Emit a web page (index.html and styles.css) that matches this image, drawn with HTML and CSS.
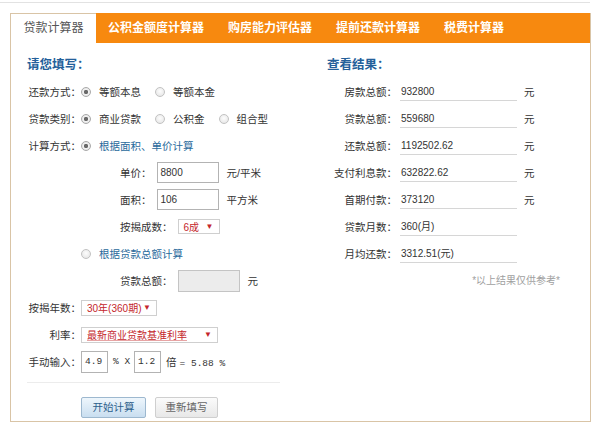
FILE: index.html
```html
<!DOCTYPE html>
<html lang="zh-CN">
<head>
<meta charset="utf-8">
<title>贷款计算器</title>
<link rel="stylesheet" href="styles.css">
</head>
<body>
<div class="topline"></div>
<div class="card">
  <div class="tabs">
    <div class="tab active">贷款计算器</div>
    <div class="tab">公积金额度计算器</div>
    <div class="tab">购房能力评估器</div>
    <div class="tab">提前还款计算器</div>
    <div class="tab">税费计算器</div>
  </div>
  <div class="panel">
    <div class="col-form">
      <h2 class="heading">请您填写：</h2>
      <div class="row">
        <span class="label">还款方式：</span>
        <label class="opt"><input type="radio" name="pay" checked>等额本息</label>
        <label class="opt"><input type="radio" name="pay">等额本金</label>
      </div>
      <div class="row">
        <span class="label">贷款类别：</span>
        <label class="opt"><input type="radio" name="kind" checked>商业贷款</label>
        <label class="opt"><input type="radio" name="kind">公积金</label>
        <label class="opt"><input type="radio" name="kind">组合型</label>
      </div>
      <div class="row">
        <span class="label">计算方式：</span>
        <label class="opt link"><input type="radio" name="mode" checked>根据面积、单价计算</label>
      </div>
      <div class="row sub">
        <span class="sub-label">单价：</span>
        <span class="box">8800</span>
        <span class="unit">元/平米</span>
      </div>
      <div class="row sub">
        <span class="sub-label">面积：</span>
        <span class="box">106</span>
        <span class="unit">平方米</span>
      </div>
      <div class="row sub">
        <span class="sub-label">按揭成数：</span>
        <span class="select sel-ratio"><span class="sel-text">6成</span><span class="arrow">▼</span></span>
      </div>
      <div class="row">
        <span class="label"></span>
        <label class="opt link"><input type="radio" name="mode">根据贷款总额计算</label>
      </div>
      <div class="row sub">
        <span class="sub-label">贷款总额：</span>
        <span class="box box-off"></span>
        <span class="unit">元</span>
      </div>
      <div class="row">
        <span class="label">按揭年数：</span>
        <span class="select sel-years"><span class="sel-text">30年(360期)</span><span class="arrow">▼</span></span>
      </div>
      <div class="row">
        <span class="label">利率：</span>
        <span class="select sel-rate"><span class="sel-text under">最新商业贷款基准利率</span><span class="arrow">▼</span></span>
      </div>
      <div class="row">
        <span class="label">手动输入：</span>
        <span class="box mono small">4.9</span>
        <span class="mono op">% X</span>
        <span class="box mono small">1.2</span>
        <span class="op">倍 <span class="mono">= 5.88 %</span></span>
      </div>
      <div class="sep"></div>
      <div class="actions">
        <button class="btn btn-go">开始计算</button>
        <button class="btn btn-reset">重新填写</button>
      </div>
    </div>
    <div class="col-result">
      <h2 class="heading">查看结果：</h2>
      <div class="row"><span class="rlabel">房款总额：</span><span class="val">932800</span><span class="runit">元</span></div>
      <div class="row"><span class="rlabel">贷款总额：</span><span class="val">559680</span><span class="runit">元</span></div>
      <div class="row"><span class="rlabel">还款总额：</span><span class="val">1192502.62</span><span class="runit">元</span></div>
      <div class="row"><span class="rlabel">支付利息款：</span><span class="val">632822.62</span><span class="runit">元</span></div>
      <div class="row"><span class="rlabel">首期付款：</span><span class="val">373120</span><span class="runit">元</span></div>
      <div class="row"><span class="rlabel">贷款月数：</span><span class="val">360(月)</span></div>
      <div class="row"><span class="rlabel">月均还款：</span><span class="val">3312.51(元)</span></div>
      <div class="note">*以上结果仅供参考*</div>
    </div>
  </div>
</div>
</body>
</html>
```

FILE: styles.css
```css
body {
  margin: 0;
  background: #fff;
  color: #333;
  font-family: "Liberation Sans", "Noto Sans CJK SC", sans-serif;
  font-size: 10.5px;
}

.topline {
  width: 590px;
  height: 1px;
  margin-top: 2px;
  background: #e2e2e2;
}

.card {
  width: 579px;
  margin: 10px 0 0 10px;
  border: 1px solid #d9c4a6;
  border-top: none;
}

/* tab strip */
.tabs {
  display: flex;
  height: 30px;
  background: #f7890f;
}

.tab {
  padding: 0 12px;
  color: #fff;
  font-size: 12px;
  font-weight: bold;
  line-height: 30px;
  white-space: nowrap;
}

.tab.active {
  box-sizing: border-box;
  width: 85px;
  padding: 0;
  background: #fff;
  border-top: 1px solid #d9c4a6;
  color: #555;
  font-weight: normal;
  line-height: 29px;
  text-align: center;
}

/* two columns */
.panel {
  display: flex;
  padding: 9px 0 3px 16px;
}

.col-form {
  width: 300px;
}

.col-result {
  width: 250px;
}

.heading {
  margin: 0;
  height: 26px;
  line-height: 26px;
  font-size: 12.5px;
  font-weight: bold;
  color: #24609a;
}

.row {
  display: flex;
  align-items: center;
  height: 27px;
  white-space: nowrap;
}

.label {
  width: 54px;
  text-align: right;
}

.opt {
  display: flex;
  align-items: center;
  margin-right: 14px;
}

.opt.link {
  color: #2a6a9c;
}

/* radios */
.opt input {
  appearance: none;
  -webkit-appearance: none;
  box-sizing: border-box;
  width: 10px;
  height: 10px;
  margin: 0 8px 0 0;
  border: 1px solid #c2c2c2;
  border-radius: 50%;
  background: radial-gradient(circle at 50% 40%, #fdfdfd 0, #e2e2e2 100%);
}

.opt input:checked {
  border-color: #a9a9a9;
  background: radial-gradient(circle, #6a6a6a 0, #6a6a6a 1.8px, #f2f2f2 2.5px, #dcdcdc 100%);
}

/* indented sub rows */
.row.sub {
  padding-left: 93px;
}

.sub-label {
  margin-right: 5px;
}

.box {
  box-sizing: border-box;
  display: inline-block;
  width: 62px;
  height: 21px;
  padding: 0 3px;
  border: 1px solid #b3b3b3;
  font-size: 10px;
  line-height: 19px;
  color: #333;
}

.box-off {
  height: 22px;
  background: #ececec;
  border-color: #c4c4c4;
}

.box.small {
  width: 27px;
  height: 22px;
  line-height: 20px;
}

.unit {
  margin-left: 8px;
}

.mono {
  font-family: "Liberation Mono", monospace;
  font-size: 9.5px;
}

.op {
  margin: 0 4px 0 5px;
}

/* drop-downs */
.select {
  box-sizing: border-box;
  display: inline-flex;
  align-items: center;
  justify-content: space-between;
  height: 16px;
  padding: 0 5px;
  border: 1px solid #cfcfcf;
  color: #c4262b;
  font-size: 10px;
}

.sel-ratio {
  width: 42px;
  height: 15px;
}

.sel-years {
  width: 76px;
}

.sel-rate {
  width: 137px;
}

.under {
  text-decoration: underline;
  text-decoration-color: #e7a4a4;
}

.arrow {
  font-size: 8px;
  color: #c4262b;
}

/* footer buttons */
.sep {
  width: 253px;
  height: 1px;
  margin-top: 7px;
  background: #ececec;
}

.actions {
  display: flex;
  gap: 9px;
  margin-top: 14px;
  padding-left: 54px;
}

.btn {
  box-sizing: border-box;
  height: 21px;
  padding: 0;
  border-radius: 2px;
  font-family: "Liberation Sans", "Noto Sans CJK SC", sans-serif;
  font-size: 10.5px;
  line-height: 19px;
}

.btn-go {
  width: 65px;
  border: 1px solid #9db8cf;
  background: linear-gradient(#eef6fc, #c9def0);
  color: #2d5f8c;
}

.btn-reset {
  width: 63px;
  border: 1px solid #cfcfcf;
  background: linear-gradient(#fbfbfb, #e8e8e8);
  color: #666;
}

/* results */
.rlabel {
  width: 70px;
  text-align: right;
}

.val {
  box-sizing: border-box;
  width: 117px;
  height: 18px;
  margin-left: 3px;
  padding-left: 1px;
  border-bottom: 1px solid #d6d6d6;
  line-height: 18px;
  font-size: 10px;
}

.runit {
  margin-left: 7px;
}

.note {
  width: 233px;
  height: 27px;
  line-height: 27px;
  text-align: right;
  color: #a0a0a0;
  font-size: 10px;
}
```
